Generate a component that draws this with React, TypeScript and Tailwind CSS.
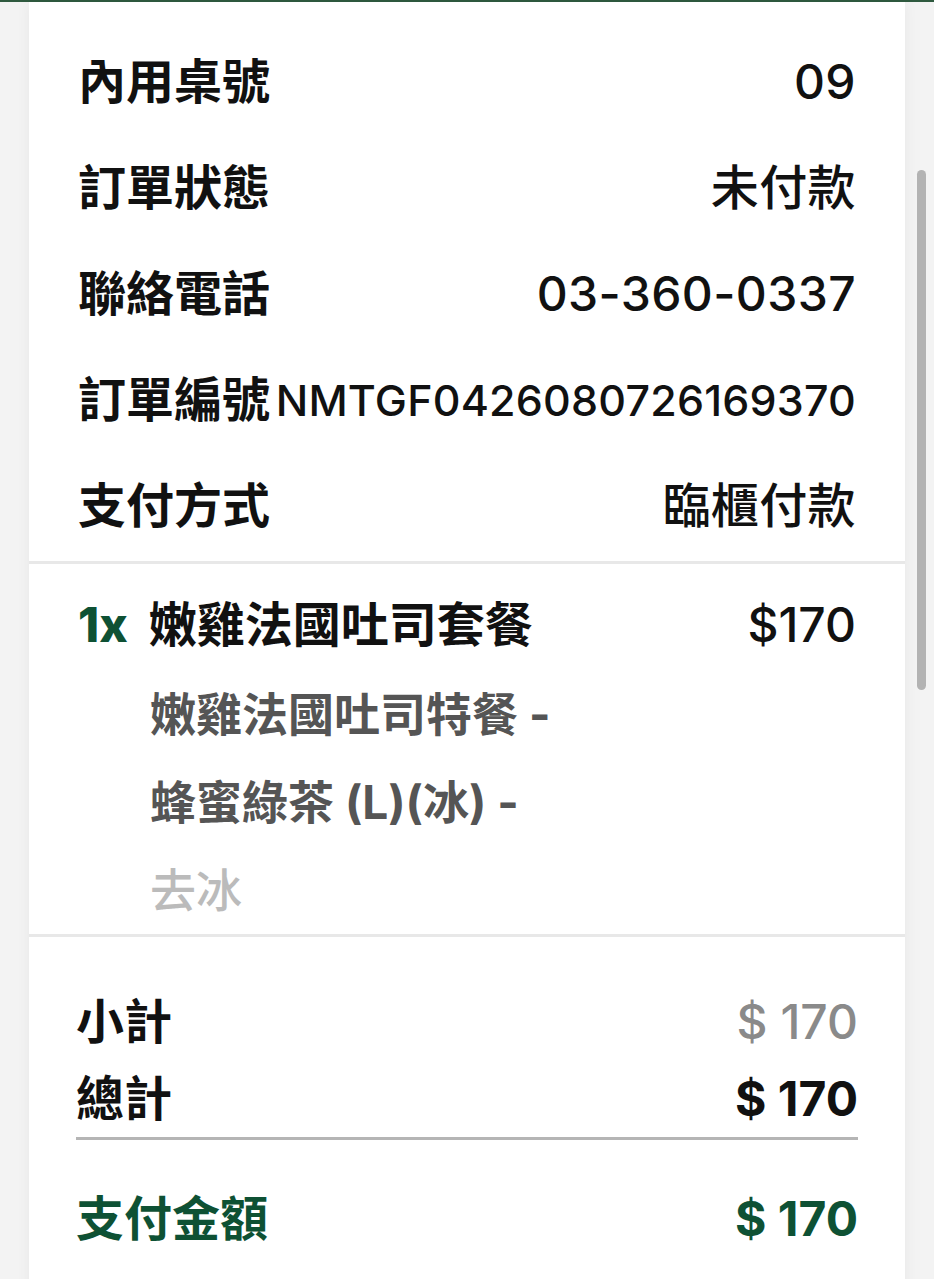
import React from 'react';

const font = { fontFamily: 'Inter, "Noto Sans CJK TC", sans-serif' };

const infoRows = [
  { label: '內用桌號', value: '09' },
  { label: '訂單狀態', value: '未付款' },
  { label: '聯絡電話', value: '03-360-0337' },
  { label: '訂單編號', value: 'NMTGF0426080726169370', small: true },
  { label: '支付方式', value: '臨櫃付款' },
];

export default function App() {
  return (
    <div className="relative min-h-screen bg-[#f3f3f3] text-[#111111]" style={font}>
      <div className="h-[2px] bg-[#2f5a3f]" />

      <div className="mx-[29px] bg-white shadow-[0_0_14px_rgba(0,0,0,0.05)]">
        {/* order info */}
        <div className="pt-[27px] pb-[2px]">
          {infoRows.map((row) => (
            <div key={row.label} className="flex h-[106px] items-center justify-between px-[49px]">
              <span className="text-[48px] font-bold leading-none">{row.label}</span>
              <span
                className={
                  row.small
                    ? 'text-[43px] font-medium leading-none tracking-[0.2px]'
                    : 'text-[48px] font-medium leading-none tracking-[0.4px]'
                }
              >
                {row.value}
              </span>
            </div>
          ))}
        </div>

        {/* item */}
        <div className="border-t-[3px] border-[#e8e8e8] pt-[16px] px-[49px]">
          <div className="flex h-[90px] items-center justify-between">
            <div className="flex items-center gap-[21px] text-[48px] leading-none">
              <span className="font-extrabold text-[#0e5134]">1x</span>
              <span className="font-bold">嫩雞法國吐司套餐</span>
            </div>
            <span className="text-[48px] font-medium leading-none">$170</span>
          </div>
          <div className="pl-[72px] text-[46px] leading-[88px]">
            <div className="font-bold text-[#555555]">嫩雞法國吐司特餐 -</div>
            <div className="font-bold text-[#555555]">蜂蜜綠茶 (L)(冰) -</div>
            <div className="font-medium text-[#bbbbbb]">去冰</div>
          </div>
        </div>

        {/* totals */}
        <div className="border-t-[3px] border-[#e8e8e8] px-[47px] pt-[46px] pb-[60px]">
          <div className="border-b-[3px] border-[#b5b5b5]">
            <div className="flex h-[77px] items-center justify-between">
              <span className="text-[48px] font-bold leading-none">小計</span>
              <span className="text-[48px] font-medium leading-none text-[#8a8a8a]">$ 170</span>
            </div>
            <div className="flex h-[77px] items-center justify-between">
              <span className="text-[48px] font-bold leading-none">總計</span>
              <span className="text-[48px] font-bold leading-none">$ 170</span>
            </div>
          </div>
          <div className="mt-[41px] flex h-[76px] items-center justify-between text-[#0e5134]">
            <span className="text-[48px] font-bold leading-none">支付金額</span>
            <span className="text-[48px] font-bold leading-none">$ 170</span>
          </div>
        </div>
      </div>

      {/* overlay scrollbar */}
      <div className="absolute right-[8px] top-[170px] h-[520px] w-[9px] rounded-full bg-[#b3b3b3]" />
    </div>
  );
}
